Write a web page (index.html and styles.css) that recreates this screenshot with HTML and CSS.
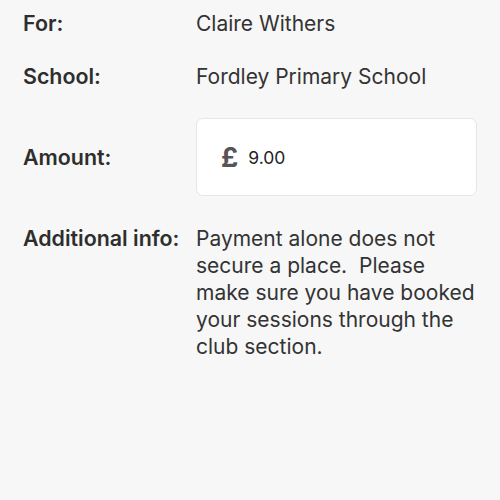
FILE: index.html
```html
<!DOCTYPE html>
<html lang="en">
<head>
  <meta charset="UTF-8" />
  <meta name="viewport" content="width=device-width, initial-scale=1" />
  <title>Payment</title>
  <link rel="stylesheet" href="styles.css">
</head>
<body>
  <div class="details">
    <div class="row">
      <div class="label">For:</div>
      <div class="value">Claire Withers</div>
    </div>
    <div class="row">
      <div class="label">School:</div>
      <div class="value">Fordley Primary School</div>
    </div>
    <div class="row amount-row">
      <div class="label">Amount:</div>
      <div class="amount-box">
        <span class="currency">£</span>
        <span class="amount">9.00</span>
      </div>
    </div>
    <div class="row info-row">
      <div class="label">Additional info:</div>
      <div class="value">Payment alone does not secure a place.&nbsp; Please make sure you have booked your sessions through the club section.</div>
    </div>
  </div>
</body>
</html>
```

FILE: styles.css
```css
body {
  background: #f7f7f7;
  font-family: Inter, "Liberation Sans", Arial, sans-serif;
  margin: 0;
  color: #333;
}
.details {
  display: flex;
  flex-direction: column;
  gap: 26px;
  padding: 10px 23px 0 23px;
}
.row {
  display: flex;
  align-items: flex-start;
  font-size: 21px;
  line-height: 27px;
}
.label {
  width: 173px;
  flex-shrink: 0;
  font-weight: 600;
  font-size: 21.4px;
  color: #2e2e2e;
}
.value {
  width: 286px;
  flex-shrink: 0;
}
.amount-row {
  align-items: center;
  margin-top: 2px;
}
.amount-box {
  width: 257px;
  height: 76px;
  background: #fff;
  border: 1px solid #e6e6e6;
  border-radius: 7px;
  display: flex;
  align-items: center;
  padding-left: 24px;
  box-sizing: content-box;
}
.currency {
  font-size: 27px;
  font-weight: 700;
  color: #555;
  margin-right: 10px;
}
.amount {
  font-size: 17.5px;
  color: #222;
}
.info-row {
  margin-top: 3px;
}
```
